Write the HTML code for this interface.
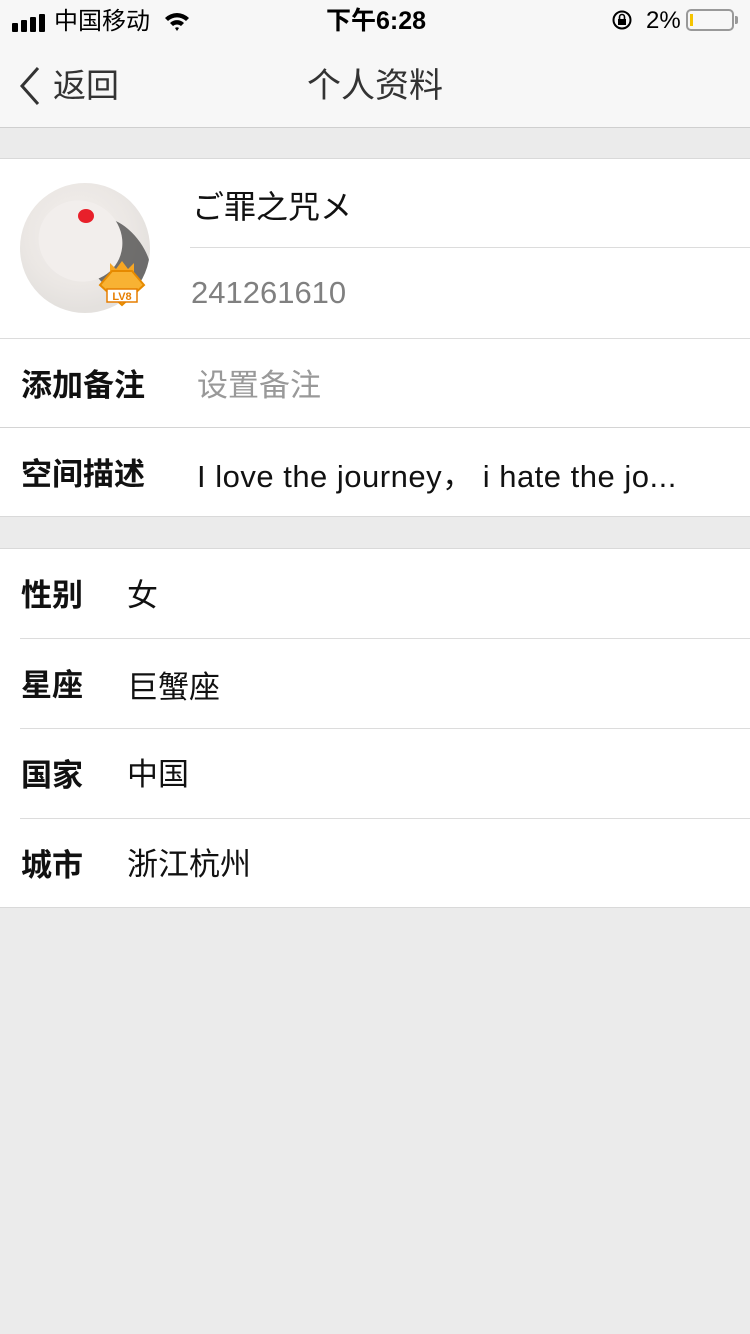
<!DOCTYPE html>
<html><head><meta charset="utf-8"><style>
*{margin:0;padding:0;box-sizing:border-box}
body{width:750px;height:1334px;background:#ebebeb;font-family:"Liberation Sans","Noto Sans CJK SC",sans-serif;position:relative;overflow:hidden}
.abs{position:absolute}
.top{left:0;top:0;width:750px;height:128px;background:#f7f7f7;border-bottom:1px solid #cfcfcf}
.sec{left:0;width:750px;background:#fff;border-top:1px solid #d9d9d9;border-bottom:1px solid #d9d9d9}
.line{height:1px;background:#dcdcdc}
.lbl{font-size:31px;color:#111;font-weight:bold}
.val{font-size:31px;color:#111}
</style></head><body>
<div class="abs top">
 <div class="abs" style="left:12px;top:14px;display:flex;align-items:flex-end;gap:3px">
  <div style="width:6px;height:9px;background:#000;border-radius:1px"></div>
  <div style="width:6px;height:12px;background:#000;border-radius:1px"></div>
  <div style="width:6px;height:15px;background:#000;border-radius:1px"></div>
  <div style="width:6px;height:18px;background:#000;border-radius:1px"></div>
 </div>
 <div class="abs" style="left:54px;top:1px;font-size:24px;color:#000">中国移动</div>
 <svg class="abs" style="left:163px;top:10px" width="28" height="22" viewBox="0 0 28 22"><path d="M2 8 A17 17 0 0 1 26 8 L23 11 A13 13 0 0 0 5 11Z M7 13 A10 10 0 0 1 21 13 L18 16 A6 6 0 0 0 10 16Z M12 18 L14 21 L16 18 A3 3 0 0 0 12 18Z" fill="#000"/></svg>
 <div class="abs" style="left:326px;top:1px;font-size:25px;font-weight:bold;color:#000">下午6:28</div>
 <svg class="abs" style="left:611px;top:9px" width="22" height="22" viewBox="0 0 22 22"><circle cx="11" cy="11" r="8.5" fill="none" stroke="#000" stroke-width="2"/><rect x="7" y="10" width="8" height="6" fill="#000"/><path d="M8.5 10 V8 a2.5 2.5 0 0 1 5 0 V10" fill="none" stroke="#000" stroke-width="1.6"/></svg>
 <div class="abs" style="left:646px;top:7px;font-size:24px;color:#000">2%</div>
 <div class="abs" style="left:686px;top:9px;width:48px;height:22px;border:2px solid #999;border-radius:5px"><div style="position:absolute;left:2px;top:3px;width:3px;height:12px;background:#f5c400"></div></div>
 <div class="abs" style="left:735px;top:16px;width:3px;height:8px;background:#999;border-radius:0 2px 2px 0"></div>
 <svg class="abs" style="left:18px;top:66px" width="24" height="40" viewBox="0 0 24 40"><path d="M20 2 L4 20 L20 38" fill="none" stroke="#333" stroke-width="3"/></svg>
 <div class="abs" style="left:53px;top:59px;font-size:33px;color:#333">返回</div>
 <div class="abs" style="left:0;width:750px;text-align:center;top:58px;font-size:34px;color:#333">个人资料</div>
</div>

<div class="abs sec" style="top:158px;height:181px">
 <div class="abs" style="left:20px;top:24px;width:130px;height:130px;border-radius:50%;background:radial-gradient(circle at 45% 40%,#f4f0ee 0,#ebe7e4 50%,#e4e1de 70%);overflow:hidden">
  <div class="abs" style="left:70px;top:30px;width:55px;height:90px;background:#3a3a3a;border-radius:50%;transform:rotate(-35deg);opacity:.7"></div>
  <div class="abs" style="left:18px;top:18px;width:85px;height:80px;background:#f2eeec;border-radius:50%;transform:rotate(30deg)"></div>
  <div class="abs" style="left:58px;top:26px;width:16px;height:14px;background:#e8202a;border-radius:50%"></div>
 </div>
 <svg class="abs" style="left:98px;top:100px" width="48" height="50" viewBox="0 0 48 50"><path d="M12 4 L18 10 L24 2 L30 10 L36 4 L36 14 L12 14Z" fill="#f7a623"/><path d="M2 26 L14 12 L34 12 L46 26 L24 46Z" fill="#f8b233" stroke="#e68a00" stroke-width="2"/><rect x="9" y="30" width="30" height="13" fill="#fff" stroke="#e67e00" stroke-width="1.5"/><text x="24" y="41" font-size="11" font-weight="bold" fill="#e67e00" text-anchor="middle" font-family="Liberation Sans">LV8</text></svg>
 <div class="abs" style="left:192px;top:23px;font-size:32px;color:#111">ご罪之咒メ</div>
 <div class="abs line" style="left:190px;top:88px;width:560px"></div>
 <div class="abs" style="left:191px;top:116px;font-size:31px;color:#808080">241261610</div>
</div>
<div class="abs line" style="left:0;top:338px;width:750px"></div>
<div class="abs" style="left:0;top:339px;width:750px;height:178px;background:#fff;border-bottom:1px solid #d9d9d9">
 <div class="abs lbl" style="left:21px;top:21px">添加备注</div>
 <div class="abs val" style="left:197px;top:21px;color:#999">设置备注</div>
 <div class="abs line" style="left:0;top:88px;width:750px;background:#d4d4d4"></div>
 <div class="abs lbl" style="left:21px;top:110px">空间描述</div>
 <div class="abs val" style="left:197px;top:112px;letter-spacing:0.5px">I love the journey， i hate the jo...</div>
</div>

<div class="abs sec" style="top:548px;height:360px">
 <div class="abs lbl" style="left:21px;top:21px">性别</div><div class="abs val" style="left:127px;top:21px">女</div>
 <div class="abs line" style="left:20px;top:89px;width:730px"></div>
 <div class="abs lbl" style="left:21px;top:111px">星座</div><div class="abs val" style="left:127px;top:113px">巨蟹座</div>
 <div class="abs line" style="left:20px;top:179px;width:730px"></div>
 <div class="abs lbl" style="left:21px;top:201px">国家</div><div class="abs val" style="left:127px;top:200px">中国</div>
 <div class="abs line" style="left:20px;top:269px;width:730px"></div>
 <div class="abs lbl" style="left:21px;top:291px">城市</div><div class="abs val" style="left:127px;top:290px">浙江杭州</div>
</div>
</body></html>
